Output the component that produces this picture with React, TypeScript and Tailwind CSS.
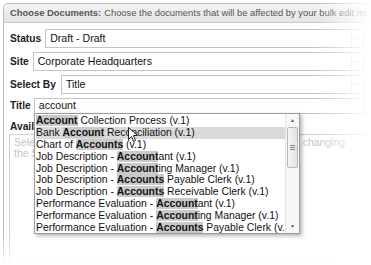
import React from 'react';

type Item = { parts: [string, boolean][] };

const items: Item[] = [
  { parts: [['Account', true], [' Collection Process (v.1)', false]] },
  { parts: [['Bank ', false], ['Account', true], [' Reconciliation (v.1)', false]] },
  { parts: [['Chart of ', false], ['Accounts', true], [' (v.1)', false]] },
  { parts: [['Job Description - ', false], ['Account', true], ['ant (v.1)', false]] },
  { parts: [['Job Description - ', false], ['Account', true], ['ing Manager (v.1)', false]] },
  { parts: [['Job Description - ', false], ['Accounts', true], [' Payable Clerk (v.1)', false]] },
  { parts: [['Job Description - ', false], ['Accounts', true], [' Receivable Clerk (v.1)', false]] },
  { parts: [['Performance Evaluation - ', false], ['Account', true], ['ant (v.1)', false]] },
  { parts: [['Performance Evaluation - ', false], ['Account', true], ['ing Manager (v.1)', false]] },
  { parts: [['Performance Evaluation - ', false], ['Accounts', true], [' Payable Clerk (v.1)', false]] },
];

function Chevron() {
  return (
    <svg width="7" height="5" viewBox="0 0 7 5" fill="none">
      <path d="M0.5 1l3 3 3-3" stroke="#b8b8b8" strokeWidth="1" />
    </svg>
  );
}

function SelectBox({ value }: { value: string }) {
  return (
    <div className="flex-1 h-[19px] flex items-stretch border border-[#c4c4c4] bg-white">
      <div className="flex-1 flex items-center pl-[4px] text-[10.6px] text-[#111]">{value}</div>
      <div className="w-[12px] border-l border-[#e2e2e2] flex items-center justify-center">
        <Chevron />
      </div>
    </div>
  );
}

function Label({ children }: { children: React.ReactNode }) {
  return <span className="text-[10.2px] font-bold text-[#222] whitespace-nowrap">{children}</span>;
}

export default function App() {
  return (
    <div
      className="relative w-[371px] h-[265px] overflow-hidden bg-white"
      style={{ fontFamily: '"Liberation Sans", Arial, sans-serif' }}
    >
      <div className="ml-[3px] mt-[3px] w-[375px] h-[270px] border border-[#b9b9b9] rounded-tl-[5px] bg-white">
        <div className="h-[19px] flex items-center pl-[6px] text-[9.4px] text-[#555] bg-gradient-to-b from-[#f3f3f3] to-[#e4e4e4] border-b border-[#c8c8c8] rounded-tl-[5px] whitespace-nowrap">
          <span className="font-bold">Choose Documents:</span>
          <span className="ml-[3px]">Choose the documents that will be affected by your bulk edit modifications</span>
        </div>

        <div className="pl-[6px] pt-[6px] flex flex-col w-[360px]">
          <div className="flex items-center gap-[4px]">
            <Label>Status</Label>
            <SelectBox value="Draft - Draft" />
          </div>
          <div className="mt-[4px] flex items-center gap-[4px]">
            <Label>Site</Label>
            <SelectBox value="Corporate Headquarters" />
          </div>
          <div className="mt-[4px] flex items-center gap-[5px]">
            <Label>Select By</Label>
            <SelectBox value="Title" />
          </div>
          <div className="mt-[4px] flex items-center gap-[3px] -mr-[1px]">
            <Label>Title</Label>
            <div className="flex-1 h-[16px] flex items-center border border-[#c4c4c4] pl-[4px] text-[10.6px] text-[#111]">
              account
            </div>
          </div>
          <div className="mt-[4px] leading-[13px]">
            <Label>Available Documents</Label>
          </div>
          <div className="mt-[1px] -ml-[1px] h-[130px] w-[380px] border border-[#cfcfcf] px-[4px] pt-[2px] text-[10.4px] leading-[11px] text-[#c4c4c4]">
            Select a site and status above to load the list of documents, or changing
            <br />
            the Status will reload it.
          </div>
        </div>
      </div>

      {/* autocomplete list */}
      <div className="absolute left-[34px] top-[113px] w-[266px] h-[121px] border border-[#9a9a9a] bg-white shadow-[2px_2px_4px_rgba(0,0,0,0.3)] flex">
        <div className="flex-1 flex flex-col pl-[1px] pt-[1px] text-[10.4px] leading-[11.9px] text-[#111] overflow-hidden">
          {items.map((it, i) => (
            <div key={i} className={`h-[11.9px] whitespace-nowrap ${i === 1 ? 'bg-[#dadada]' : ''}`}>
              {it.parts.map(([t, b], j) =>
                b ? (
                  <span key={j} className="font-bold bg-[#c9c9c9]">{t}</span>
                ) : (
                  <span key={j}>{t}</span>
                )
              )}
            </div>
          ))}
        </div>
        <div className="w-[14px] border-l border-[#e4e4e4] bg-[#f7f7f7] flex flex-col items-center">
          <div className="h-[13px] flex items-center justify-center text-[5px] text-[#555]">▲</div>
          <div className="w-[11px] h-[41px] border border-[#b9b9b9] rounded-[2px] bg-gradient-to-r from-[#f4f4f4] to-[#e2e2e2] flex flex-col items-center justify-center gap-[1px]">
            <div className="w-[5px] h-px bg-[#888]" />
            <div className="w-[5px] h-px bg-[#888]" />
            <div className="w-[5px] h-px bg-[#888]" />
          </div>
          <div className="flex-1" />
          <div className="h-[13px] flex items-center justify-center text-[5px] text-[#555]">▼</div>
        </div>
      </div>

      {/* mouse cursor */}
      <svg className="absolute left-[128px] top-[127px]" width="10" height="16" viewBox="0 0 10 16">
        <path d="M0.5 0.5v12l3-3 2 5 2-1-2-5h4z" fill="#fff" stroke="#222" strokeWidth="1" />
      </svg>

      {/* edge fades */}
      <div className="pointer-events-none absolute right-0 top-0 w-[55px] h-full bg-gradient-to-r from-transparent to-white" />
      <div className="pointer-events-none absolute left-0 bottom-0 w-full h-[30px] bg-gradient-to-b from-transparent to-white" />
    </div>
  );
}
